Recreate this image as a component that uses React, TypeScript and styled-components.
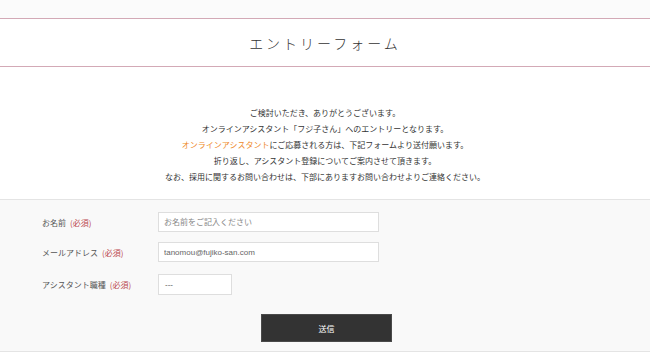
import React from "react";
import styled, { createGlobalStyle } from "styled-components";

const GlobalStyle = createGlobalStyle`
  html, body {
    margin: 0;
    padding: 0;
    background: #fff;
  }
  body {
    font-family: "Noto Sans CJK JP", "Noto Sans", sans-serif;
    color: #333;
  }
`;

const TopBand = styled.div`
  height: 18px;
  background: #fbfbfb;
`;

const TitleBar = styled.header`
  height: 47px;
  border-top: 1px solid #d3a9b6;
  border-bottom: 1px solid #d3a9b6;
  display: flex;
  align-items: center;
  justify-content: center;
  h1 {
    margin: 0;
    font-size: 14px;
    font-weight: 300;
    letter-spacing: 3px;
    color: #333;
  }
`;

const Intro = styled.div`
  margin: 38px 0 14px;
  text-align: center;
  font-size: 8px;
  line-height: 16px;
  color: #333;
  p {
    margin: 0;
  }
  .accent {
    color: #ee8a2a;
  }
`;

const FormArea = styled.form`
  background: #f9f9f9;
  border-top: 1px solid #e4e4e4;
  border-bottom: 1px solid #e4e4e4;
  padding: 12px 0 9px;
`;

const Row = styled.div<{ $gap: number }>`
  display: grid;
  grid-template-columns: 116px auto;
  align-items: center;
  padding-left: 42px;
  margin-bottom: ${(p) => p.$gap}px;
`;

const Label = styled.label`
  font-size: 8px;
  color: #555;
  .req {
    color: #b9474d;
    margin-left: 4px;
  }
`;

const Field = styled.input`
  box-sizing: border-box;
  width: 221px;
  height: 20px;
  border: 1px solid #dedede;
  background: #fff;
  padding: 0 5px;
  font-family: "Liberation Sans", "Noto Sans CJK JP", sans-serif;
  font-size: 8px;
  color: #666;
  outline: none;
  &::placeholder {
    color: #888;
    font-family: "Noto Sans CJK JP", sans-serif;
  }
`;

const SelectBox = styled.div`
  box-sizing: border-box;
  width: 74px;
  height: 21px;
  border: 1px solid #dedede;
  background: #fff;
  padding: 0 6px;
  display: flex;
  align-items: center;
  font-family: "Liberation Sans", sans-serif;
  font-size: 8px;
  color: #555;
`;

const Actions = styled.div`
  display: flex;
  justify-content: center;
  padding-left: 3px;
`;

const SubmitButton = styled.button`
  width: 131px;
  height: 28px;
  background: #333;
  border: 1px solid #4a4a4a;
  color: #fff;
  font-family: "Noto Sans CJK JP", sans-serif;
  font-size: 8px;
  cursor: pointer;
`;

export default function App() {
  return (
    <>
      <GlobalStyle />
      <TopBand />
      <TitleBar>
        <h1>エントリーフォーム</h1>
      </TitleBar>
      <Intro>
        <p>ご検討いただき、ありがとうございます。</p>
        <p>オンラインアシスタント「フジ子さん」へのエントリーとなります。</p>
        <p>
          <span className="accent">オンラインアシスタント</span>
          にご応募される方は、下記フォームより送付願います。
        </p>
        <p>折り返し、アシスタント登録についてご案内させて頂きます。</p>
        <p>なお、採用に関するお問い合わせは、下部にありますお問い合わせよりご連絡ください。</p>
      </Intro>
      <FormArea onSubmit={(e) => e.preventDefault()}>
        <Row $gap={10}>
          <Label>
            お名前<span className="req">(必須)</span>
          </Label>
          <Field placeholder="お名前をご記入ください" />
        </Row>
        <Row $gap={12}>
          <Label>
            メールアドレス<span className="req">(必須)</span>
          </Label>
          <Field defaultValue="tanomou@fujiko-san.com" />
        </Row>
        <Row $gap={19}>
          <Label>
            アシスタント職種<span className="req">(必須)</span>
          </Label>
          <SelectBox>---</SelectBox>
        </Row>
        <Actions>
          <SubmitButton type="submit">送信</SubmitButton>
        </Actions>
      </FormArea>
    </>
  );
}
